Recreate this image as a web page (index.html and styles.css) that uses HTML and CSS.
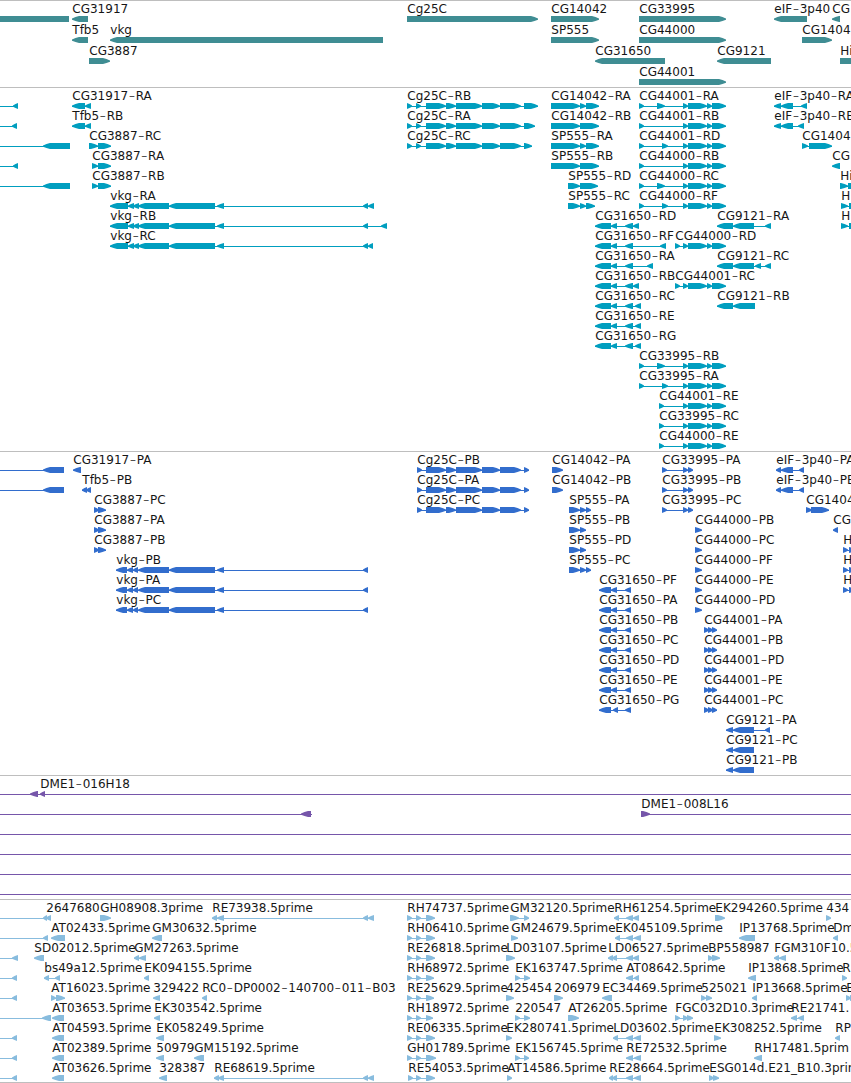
FILE: index.html
```html
<!DOCTYPE html>
<html lang="en">
<head>
<meta charset="utf-8">
<title>Genome browser</title>
<link rel="stylesheet" href="styles.css">
</head>
<body>
<main class="browser">
  <section class="track track-genes" id="genes"></section>
  <section class="track track-transcripts" id="transcripts"></section>
  <section class="track track-proteins" id="proteins"></section>
  <section class="track track-bacs" id="bacs"></section>
  <section class="track track-ests" id="ests"></section>
</main>
<script src="tracks.js"></script>
</body>
</html>
```

FILE: styles.css
```css
* { box-sizing: border-box; }

body {
  margin: 0;
  background: #fff;
}

.browser {
  display: flex;
  flex-direction: column;
  width: 851px;
  height: 1083px;
  overflow: hidden;
  border-bottom: 1px solid #bebebe;
}

.track {
  flex: none;
  border-top: 1px solid #bebebe;
  overflow: hidden;
}

.track-genes { height: 87px; color: #3f8d93; }
.track-transcripts { height: 364px; color: #009ebf; }
.track-proteins { height: 324px; color: #326dcd; }
.track-bacs { height: 124px; color: #7656aa; }
.track-ests { height: 183px; color: #88bcde; }

.lane {
  display: block;
  width: 851px;
  height: 100%;
}

.glyph { fill: currentColor; }

.label {
  fill: #161616;
  font-family: "DejaVu Sans", sans-serif;
  font-size: 12px;
  white-space: pre;
}

.dash {
  font-family: "DejaVu Sans Light", "DejaVu Sans", sans-serif;
  font-size: 18px;
  font-weight: 200;
}
```

FILE: tracks.js
```js
const NS = 'http://www.w3.org/2000/svg';

// Feature: [row, label, start, strand, "exon exon ...", lineStart, lineEnd]
const five = (rows, ex) => rows.map(r => [r[0], r[1], r[2], r[3] || '>', ex]);

const genes = [
  [0, '', 0, '=', '0-69'],
  [0, 'CG31917', 72, '<', '72-88'],
  [0, 'Cg25C', 407, '>', '407-538'],
  [0, 'CG14042', 551, '>', '551-599'],
  [0, 'CG33995', 639, '>', '639-726'],
  [0, 'eIF-3p40', 774, '<', '774-807'],
  [0, 'CG', 832, '<', '832-840'],
  [1, 'Tfb5', 72, '<', '72-88'],
  [1, 'vkg', 110, '<', '110-383'],
  [1, 'SP555', 551, '>', '551-599'],
  [1, 'CG44000', 639, '>', '639-726'],
  [1, 'CG1404', 802, '>', '802-832'],
  [2, 'CG3887', 89, '>', '89-110'],
  [2, 'CG31650', 595, '<', '595-665'],
  [2, 'CG9121', 717, '<', '717-771'],
  [2, 'Hi', 840, '>', '840-880'],
  [3, 'CG44001', 639, '>', '639-726']
];

const colT = '407-412 416-421 426-446 446-456 456-482 482-500 500-521 ';
const vkgT = '110-128 128-134 133-139 138-169 169-215 217-224 363-368 ';
const tailT = '683-688 688-707 707-712 712-726';
const c31 = '595-611 611-617 625-633 ';
const transcripts = [
  [0, '', 13, '<', '13-18', 0],
  [1, '', 12, '<', '12-17', 0],
  [2, '', 43, '<', '43-70', 0],
  [3, '', 13, '<', '13-18', 0],
  [4, '', 43, '<', '43-70', 0],
  [0, 'CG31917-RA', 72, '<', '72-85 85-91'],
  [1, 'Tfb5-RB', 72, '<', '72-85 85-91'],
  [2, 'CG3887-RC', 89, '>', '89-98 98-111'],
  [3, 'CG3887-RA', 92, '>', '92-98 98-111'],
  [4, 'CG3887-RB', 92, '>', '92-98 98-111'],
  [5, 'vkg-RA', 110, '<', vkgT + '368-374'],
  [6, 'vkg-RB', 110, '<', vkgT + '381-387'],
  [7, 'vkg-RC', 110, '<', vkgT + '368-373'],
  [0, 'Cg25C-RB', 407, '>', colT + '524-538'],
  [1, 'Cg25C-RA', 407, '>', colT + '524-535'],
  [2, 'Cg25C-RC', 407, '>', colT + '524-532'],
  [0, 'CG14042-RA', 551, '>', '551-580 580-586 586-599'],
  [1, 'CG14042-RB', 551, '>', '551-580 580-599'],
  [2, 'SP555-RA', 551, '>', '551-580 580-586 586-599'],
  [3, 'SP555-RB', 551, '>', '551-580 580-599'],
  [4, 'SP555-RD', 568, '>', '568-580 580-598'],
  [5, 'SP555-RC', 568, '>', '568-580 580-586 586-595'],
  [0, 'CG44001-RA', 639, '>', '639-644 657-665 ' + tailT],
  [1, 'CG44001-RB', 639, '>', '639-644 ' + tailT],
  [2, 'CG44001-RD', 639, '>', '639-644 662-668 ' + tailT],
  [3, 'CG44000-RB', 639, '>', '639-644 ' + tailT],
  [4, 'CG44000-RC', 639, '>', '639-644 657-665 ' + tailT],
  [5, 'CG44000-RF', 639, '>', '639-644 662-668 ' + tailT],
  [6, 'CG31650-RD', 595, '<', c31 + '633-639'],
  [7, 'CG31650-RF', 595, '<', c31 + '660-666'],
  [8, 'CG31650-RA', 595, '<', c31 + '647-653'],
  [9, 'CG31650-RB', 595, '<', c31 + '633-639'],
  [10, 'CG31650-RC', 595, '<', c31 + '635-641'],
  [11, 'CG31650-RE', 595, '<', c31 + '635-641'],
  [12, 'CG31650-RG', 595, '<', c31 + '635-641'],
  [7, 'CG44000-RD', 675, '>', '675-680 ' + tailT],
  [9, 'CG44001-RC', 675, '>', '675-680 ' + tailT],
  [6, 'CG9121-RA', 717, '<', '717-733 733-754 765-771'],
  [8, 'CG9121-RC', 717, '<', '717-733 733-754 755-761 765-771'],
  [10, 'CG9121-RB', 717, '<', '717-733 733-755'],
  [13, 'CG33995-RB', 639, '>', '639-644 657-665 ' + tailT],
  [14, 'CG33995-RA', 639, '>', '639-644 662-668 ' + tailT],
  [15, 'CG44001-RE', 659, '>', '659-664 ' + tailT],
  [16, 'CG33995-RC', 659, '>', '659-664 ' + tailT],
  [17, 'CG44000-RE', 659, '>', '659-664 ' + tailT],
  [0, 'eIF-3p40-RA', 774, '<', '774-781 781-793 801-807'],
  [1, 'eIF-3p40-RB', 774, '<', '774-781 781-793 798-804'],
  [2, 'CG1404', 802, '>', '802-808 809-832'],
  [3, 'CG', 832, '<', '832-840'],
  [4, 'Hi', 840, '>', '840-848 848-870'],
  [5, 'H', 841, '>', '841-848 849-870'],
  [6, 'H', 841, '>', '841-848 849-870']
];

const colP = '417-422 426-446 446-456 456-482 482-500 500-521 524-529';
const vkgP = '116-127 127-133 133-138 138-169 169-215 217-224 363-368';
const proteins = [
  [0, '', 43, '<', '43-64', 0],
  [1, '', 43, '<', '43-64', 0],
  [0, 'CG31917-PA', 73, '<', '73-81'],
  [1, 'Tfb5-PB', 82, '<', '82-87 86-91'],
  ...five([[2, 'CG3887-PC', 94], [3, 'CG3887-PA', 94], [4, 'CG3887-PB', 94]], '94-99 98-106'),
  ...five([[5, 'vkg-PB', 116, '<'], [6, 'vkg-PA', 116, '<'], [7, 'vkg-PC', 116, '<']], vkgP),
  ...five([[0, 'Cg25C-PB', 417], [1, 'Cg25C-PA', 417], [2, 'Cg25C-PC', 417]], colP),
  ...five([[0, 'CG14042-PA', 552], [1, 'CG14042-PB', 552]], '552-563'),
  [2, 'SP555-PA', 569, '>', '569-580 580-586 586-591'],
  [3, 'SP555-PB', 569, '>', '569-580 580-586'],
  [4, 'SP555-PD', 569, '>', '569-580 580-586'],
  [5, 'SP555-PC', 569, '>', '569-580 580-586 586-591'],
  ...five(['F', 'A', 'B', 'C', 'D', 'E'].map((s, i) => [6 + i, 'CG31650-P' + s, 599, '<']), '599-611 611-617 625-631'),
  [12, 'CG31650-PG', 599, '<', '599-611 613-618 625-631'],
  ...five([[0, 'CG33995-PA', 662], [1, 'CG33995-PB', 662], [2, 'CG33995-PC', 662]], '662-667 683-688 688-693'),
  ...five(['B', 'C', 'F', 'E', 'D'].map((s, i) => [3 + i, 'CG44000-P' + s, 695]), '695-702'),
  ...five(['A', 'B', 'D', 'E', 'C'].map((s, i) => [8 + i, 'CG44001-P' + s, 704]), '704-709 708-713 712-717'),
  [13, 'CG9121-PA', 726, '<', '726-733 733-754 765-770'],
  [14, 'CG9121-PC', 726, '<', '726-733 733-754'],
  [15, 'CG9121-PB', 726, '<', '726-733 733-754'],
  ...five([[0, 'eIF-3p40-PA', 776, '<'], [1, 'eIF-3p40-PB', 776, '<']], '776-781 781-793 799-804'),
  [2, 'CG1404', 806, '>', '806-812 811-829'],
  [3, 'CG', 833, '<', '833-838'],
  ...five([[4, 'H', 843], [5, 'H', 843], [6, 'H', 843]], '843-848 849-856')
];

const bacs = [
  [0, 'DME1-016H18', 40, '<', '30-38 40-45', 0, 851],
  [1, '', 301, '<', '301-311', 0, 312],
  [1, 'DME1-008L16', 641, '>', '641-650', 641, 851],
  [2, '', 0, '=', '', 0, 851],
  [3, '', 0, '=', '', 0, 851],
  [4, '', 0, '=', '', 0, 851],
  [5, '', 0, '=', '', 0, 851]
];

const ests = [
  [0, '2647680', 46, '<', '43-47 46-51', 0],
  [0, 'GH08908.3prime', 100, '>', '100-111'],
  [0, 'RE73938.5prime', 212, '<', '212-217 217-224 363-368 368-374'],
  [0, 'RH74737.5prime', 407, '>', '407-412 416-421 426-435'],
  [0, 'GM32120.5prime', 510, '>', '510-519 524-529'],
  [0, 'RH61254.5prime', 614, '<', '614-619 626-633 633-639'],
  [0, 'EK294260.5prime', 715, '>', '715-725'],
  [0, '434', 826, '>', '826-831'],
  [1, '', 43, '<', '43-48', 0],
  [1, 'AT02433.5prime', 51, '<', '51-65'],
  [1, 'GM30632.5prime', 152, '<', '152-162'],
  [1, 'RH06410.5prime', 407, '>', '407-412 416-421 426-435'],
  [1, 'GM24679.5prime', 511, '>', '511-518'],
  [1, 'EK045109.5prime', 615, '<', '615-620 626-633 634-641'],
  [1, 'IP13768.5prime', 739, '<', '739-755'],
  [1, 'Dm', 833, '<', '833-838'],
  [2, '', 12, '<', '12-18', 0],
  [2, 'SD02012.5prime', 34, '<', '34-44'],
  [2, 'GM27263.5prime', 134, '<', '134-139 139-146'],
  [2, 'RE26818.5prime', 407, '>', '407-412 416-421 426-435'],
  [2, 'LD03107.5prime', 506, '>', '506-515'],
  [2, 'LD06527.5prime', 608, '<', '608-613 612-617 626-633 633-639'],
  [2, 'BP558987', 708, '>', '708-713 712-720'],
  [2, 'FGM310F10.5', 774, '<', '774-779 779-786'],
  [3, '', 12, '<', '12-17', 0],
  [3, 'bs49a12.5prime', 44, '<', '44-49 55-60'],
  [3, 'EK094155.5prime', 144, '<', '144-149'],
  [3, 'RH68972.5prime', 407, '>', '407-412 416-421 426-434'],
  [3, 'EK163747.5prime', 515, '>', '515-520 524-530'],
  [3, 'AT08642.5prime', 626, '<', '626-633 634-639'],
  [3, 'IP13868.5prime', 748, '<', '748-756'],
  [3, 'R', 842, '>', '842-847'],
  [4, '', 12, '<', '12-17', 0],
  [4, 'AT16023.5prime', 51, '>', '51-56 56-65'],
  [4, '329422', 153, '<', '153-160'],
  [4, 'RC0-DP0002-140700-011-B03', 202, '<', '202-207'],
  [4, 'RE25629.5prime', 407, '>', '407-412 416-421 426-434'],
  [4, '425454', 506, '>', '506-514'],
  [4, '206979', 554, '>', '554-563'],
  [4, 'EC34469.5prime', 602, '<', '602-612'],
  [4, '525021', 701, '>', '701-706 706-712'],
  [4, 'IP13668.5prime', 752, '<', '752-757'],
  [4, 'E', 846, '>', '846-851 850-856'],
  [5, '', 42, '<', '42-51', 0],
  [5, 'AT03653.5prime', 52, '<', '52-64'],
  [5, 'EK303542.5prime', 154, '<', '154-160'],
  [5, 'RH18972.5prime', 407, '>', '407-412 416-421 426-433'],
  [5, '220547', 515, '>', '515-520 524-530'],
  [5, 'AT26205.5prime', 568, '>', '568-579'],
  [5, 'FGC032D10.3prime', 675, '>', '675-680 683-688 687-693'],
  [5, 'RE21741.', 791, '<', '791-797 798-804'],
  [6, '', 12, '<', '12-17', 0],
  [6, 'AT04593.5prime', 52, '<', '52-64'],
  [6, 'EK058249.5prime', 156, '<', '156-164'],
  [6, 'RE06335.5prime', 407, '>', '407-412 416-421 426-435'],
  [6, 'EK280741.5prime', 506, '>', '506-512'],
  [6, 'LD03602.5prime', 613, '<', '613-618 626-633 634-641'],
  [6, 'EK308252.5prime', 714, '>', '714-721'],
  [6, 'RP', 835, '<', '835-840'],
  [7, '', 12, '<', '12-17', 0],
  [7, 'AT02389.5prime', 52, '<', '52-64'],
  [7, '50979', 156, '<', '156-164'],
  [7, 'GM15192.5prime', 194, '<', '194-204'],
  [7, 'GH01789.5prime', 407, '>', '407-412 416-421 426-436'],
  [7, 'EK156745.5prime', 515, '>', '515-520 524-529'],
  [7, 'RE72532.5prime', 626, '<', '626-633 634-641'],
  [7, 'RH17481.5prim', 754, '<', '754-762'],
  [8, '', 12, '<', '12-17', 0],
  [8, 'AT03626.5prime', 52, '<', '52-64'],
  [8, '328387', 159, '<', '159-167'],
  [8, 'RE68619.5prime', 214, '<', '214-219 218-224 363-368 368-374'],
  [8, 'RE54053.5prime', 408, '>', '408-413 416-421 426-435'],
  [8, 'AT14586.5prime', 507, '>', '507-512'],
  [8, 'RE28664.5prime', 609, '<', '609-613 612-617 626-633 634-641'],
  [8, 'ESG014d.E21_B10.3prim', 709, '>', '709-714 713-719']
];

function add(parent, name, attrs, text) {
  const node = document.createElementNS(NS, name);
  for (const key in attrs) node.setAttribute(key, attrs[key]);
  if (text !== undefined) node.textContent = text;
  parent.appendChild(node);
  return node;
}

// Directed box, 6px tall, with a pointed head on the strand side.
function boxPath(a, b, strand, y) {
  if (strand === '=') return `M${a} ${y - 3}H${b}V${y + 3}H${a}Z`;
  const head = Math.min(b - a, 7);
  const s = strand === '>' ? 1 : -1;
  const tip = s > 0 ? b : a;
  const back = s > 0 ? a : b;
  const neck = tip - s * head;
  const knee = tip - s * head / 2;
  return `M${back} ${y - 3}H${neck}L${knee} ${y - 2}L${tip} ${y - .6}V${y + .8}L${knee} ${y + 2}L${neck} ${y + 3}H${back}Z`;
}

function addLabel(svg, label, x, y) {
  const text = add(svg, 'text', { class: 'label', x: x + 0.3, y });
  let afterDash = false;
  label.split(/(-)/).forEach(part => {
    if (part === '-') {
      add(text, 'tspan', { class: 'dash', dx: 0.5, dy: 1 }, part);
      afterDash = true;
    } else if (part) {
      add(text, 'tspan', afterDash ? { dx: 0.6, dy: -1 } : {}, part);
      afterDash = false;
    }
  });
}

function draw(id, features, axis, pitch) {
  const svg = add(document.getElementById(id), 'svg', { class: 'lane' });
  features.forEach(([row, label, x, strand, boxes, from, to]) => {
    const y = axis + row * pitch;
    const exons = boxes ? boxes.split(' ').map(b => b.split('-').map(Number)) : [];
    const start = from !== undefined ? from : exons[0][0];
    const end = to !== undefined ? to : exons[exons.length - 1][1];
    if (exons.length !== 1 || from !== undefined) {
      add(svg, 'rect', { class: 'glyph', x: start, y, width: end - start, height: 1 });
    }
    exons.forEach(([a, b]) => add(svg, 'path', { class: 'glyph', d: boxPath(a, b, strand, y) }));
    if (label) addLabel(svg, label, x, y - 6);
  });
}

// Axis offsets are measured from below each track's top rule.
draw('genes', genes, 18, 21);
draw('transcripts', transcripts, 18, 20);
draw('proteins', proteins, 18, 20);
draw('bacs', bacs, 18, 20);
draw('ests', ests, 18, 20);
```
